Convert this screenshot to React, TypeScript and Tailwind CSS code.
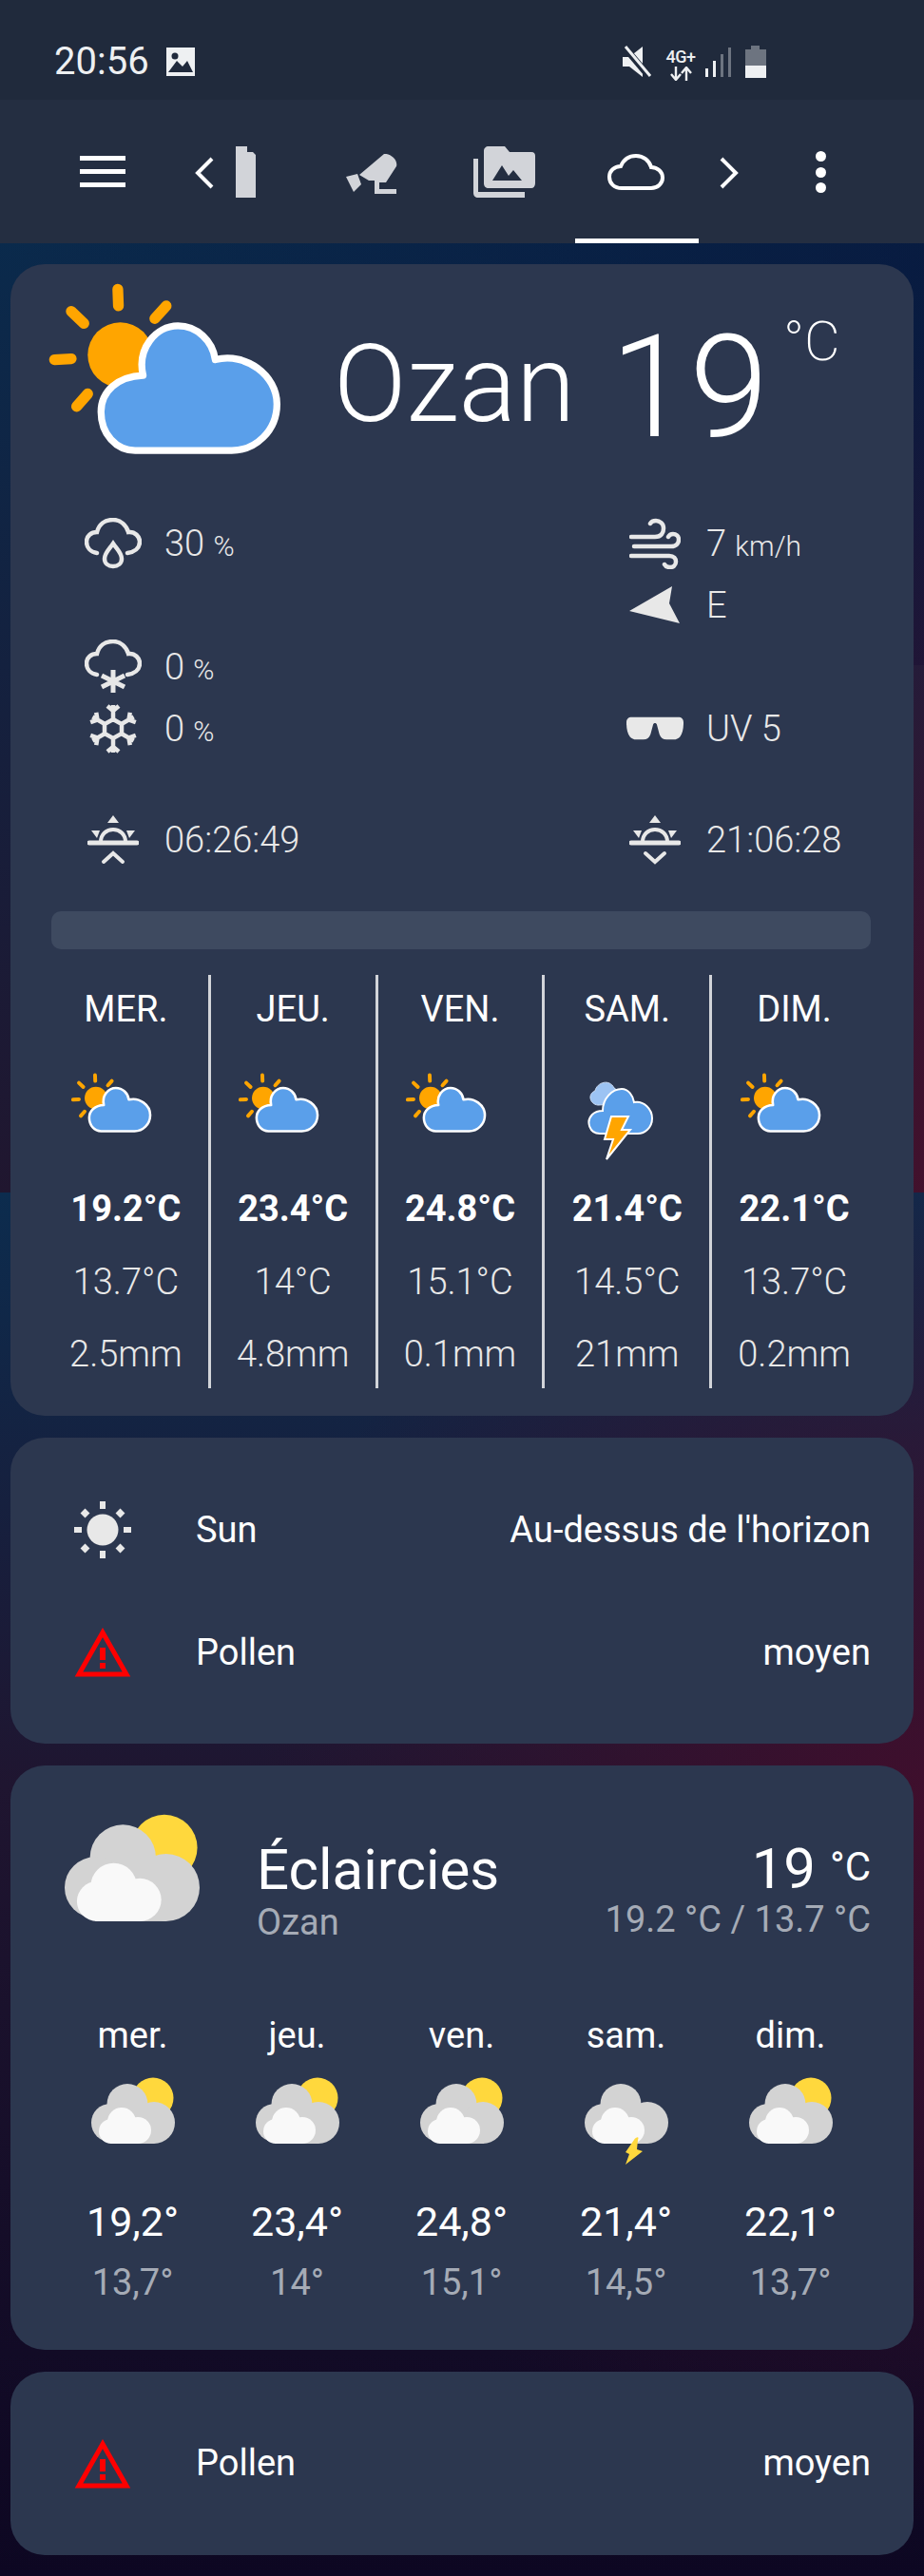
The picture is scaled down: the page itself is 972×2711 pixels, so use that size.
import React from "react";

const font = { fontFamily: "Roboto, sans-serif" };

function SunCloud({ width = 248, stroke = 22 }: { width?: number; stroke?: number }) {
  return (
    <svg width={width} height={(width * 550) / 745} viewBox="150 80 745 550" fill="none">
      <g stroke="#ffa500" strokeWidth="34" strokeLinecap="round">
        <line x1="375" y1="102" x2="377" y2="155" />
        <line x1="228" y1="172" x2="268" y2="210" />
        <line x1="528" y1="155" x2="492" y2="195" />
        <line x1="175" y1="325" x2="228" y2="322" />
        <line x1="245" y1="473" x2="280" y2="433" />
      </g>
      <circle cx="383" cy="310" r="103" fill="#ffa500" />
      <path
        d="M430 612C370 612 322 560 322 490C322 425 375 378 455 375C435 290 495 218 565 218C625 218 675 265 683 325C780 300 878 375 878 465C878 550 810 612 735 612Z"
        fill="#5a9fea"
        stroke="#fff"
        strokeWidth={stroke}
        strokeLinejoin="round"
      />
    </svg>
  );
}

function Storm() {
  return (
    <svg width="72" height="84" viewBox="0 0 72 84" fill="none">
      <path d="M12 26C3 25 1 14 9 11C11 2 24 -2 29 8C34 10 35 20 30 25Z" fill="#9cc3f3" stroke="#cfe0f8" strokeWidth="1" />
      <path d="M14 56C3 56 -1 43 6 36C9 33 13 32 17 32C17 19 27 9 37 9C44 9 49 16 50 23C60 21 69 30 69 40C69 50 61 56 54 56Z" fill="#5a9fea" stroke="#fff" strokeWidth="2" />
      <path d="M26 38H44L37 52H46L21 83L28 62H19Z" fill="#ffa500" stroke="#fff" strokeWidth="2" strokeLinejoin="miter" />
    </svg>
  );
}

function GreyCloud({ sun = true, bolt = false, width = 88 }: { sun?: boolean; bolt?: boolean; width?: number }) {
  const h = bolt ? 92 : 70;
  return (
    <svg width={width} height={(width * h) / 88} viewBox={`0 0 88 ${h}`} fill="none">
      {sun && <circle cx="65" cy="22" r="21.5" fill="#ffd83d" />}
      <g fill="#d3d3d3">
        <circle cx="38" cy="28.5" r="21.5" />
        <circle cx="20" cy="48" r="20" />
        <circle cx="66" cy="48" r="22" />
        <rect x="20" y="40" width="46" height="30" />
      </g>
      <g fill="#f9f9f9">
        <circle cx="32" cy="47" r="15" />
        <circle cx="21" cy="57" r="13" />
        <circle cx="49" cy="56" r="14" />
        <rect x="21" y="50" width="28" height="20" />
      </g>
      {bolt && <path d="M52 66C54 63 58 62 56 66L55 76L61 78L43 92L47 81L43 79Z" fill="#ffd83d" />}
    </svg>
  );
}

const I = "#e8e8e8";

function DropCloud() {
  return (
    <svg width="60" height="54" viewBox="0 0 60 54" fill="none">
      <path d="M13 37C6 36 2 31 2 25C2 19 7 15 13 15C15 7 21 2 30 2C38 2 44 8 46 15C53 14 58 20 58 25C58 32 52 36 45 37" stroke={I} strokeWidth="4.5" strokeLinecap="round" />
      <path d="M30 27C26 33 21 37 21 43C21 48 25 51 30 51C35 51 39 48 39 43C39 37 34 33 30 27Z" stroke={I} strokeWidth="4.5" />
    </svg>
  );
}
function SnowCloud() {
  return (
    <svg width="60" height="58" viewBox="0 0 60 58" fill="none">
      <path d="M13 37C6 36 2 31 2 25C2 19 7 15 13 15C15 7 21 2 30 2C38 2 44 8 46 15C53 14 58 20 58 25C58 32 52 36 45 37" stroke={I} strokeWidth="4.5" strokeLinecap="round" />
      <path d="M30 32V56M18 38L42 50M42 38L18 50" stroke={I} strokeWidth="5" />
    </svg>
  );
}
function Snowflake() {
  const arm = (
    <>
      <path d="M26 16V2M20 3L26 8L32 3" />
      <path d="M26 38V52M20 51L26 46L32 51" />
    </>
  );
  return (
    <svg width="52" height="54" viewBox="0 0 52 54" fill="none" stroke={I} strokeWidth="4.5">
      <g>{arm}</g>
      <g transform="rotate(60 26 27)">{arm}</g>
      <g transform="rotate(120 26 27)">{arm}</g>
      <path d="M26 17L35 22V32L26 37L17 32V22Z" />
    </svg>
  );
}
function Wind() {
  return (
    <svg width="54" height="54" viewBox="0 0 54 54" fill="none" stroke={I} strokeWidth="4.5" strokeLinecap="round">
      <path d="M2 20H27C34 20 36 15 36 11C36 6 32 3 28 3C25 3 23 4 22 6" />
      <path d="M5 30H44C50 30 52 26 52 23C52 19 49 17 46 17C44 17 42 18 41 20" />
      <path d="M2 40H42C47 40 49 43 49 46C49 50 46 52 43 52C40 52 38 51 37 49" />
    </svg>
  );
}
function Arrow() {
  return (
    <svg width="54" height="40" viewBox="0 0 54 40" fill={I}>
      <path d="M0 26L45 0L42 18L53 39Z" />
    </svg>
  );
}
function Glasses() {
  return (
    <svg width="64" height="26" viewBox="0 0 64 26" fill={I}>
      <path d="M6 0H58C62 0 64 2 64 6C64 13 63 18 60 22C58 24 56 25 53 25H45C41 25 38.5 23 37 19L34 8C33 6 31 6 30 8L27 19C25.5 23 23 25 19 25H11C8 25 6 24 4 22C1 18 0 13 0 6C0 2 2 0 6 0Z" />
    </svg>
  );
}
function SunTime({ up }: { up: boolean }) {
  return (
    <svg width="54" height="52" viewBox="0 0 54 52" fill="none">
      <path d="M27 0L33 8H21Z" fill={I} />
      <path d="M4 16H13L10 24Z" fill={I} />
      <path d="M50 16H41L44 24Z" fill={I} />
      <path d="M14 28C14 20 20 15 27 15C34 15 40 20 40 28" stroke={I} strokeWidth="4" />
      <path d="M2 29H52" stroke={I} strokeWidth="5" strokeLinecap="round" />
      <path d={up ? "M17 49L27 40L37 49" : "M17 40L27 49L37 40"} stroke={I} strokeWidth="4" strokeLinecap="round" />
    </svg>
  );
}
function SunIcon() {
  return (
    <svg width="60" height="60" viewBox="0 0 60 60" fill={I}>
      <circle cx="30" cy="30" r="16.5" />
      <rect x="27" y="0" width="6" height="8" />
      <rect x="27" y="52" width="6" height="8" />
      <rect x="0" y="27" width="8" height="6" />
      <rect x="52" y="27" width="8" height="6" />
      <rect x="8" y="9" width="7" height="7" transform="rotate(45 11.5 12.5)" />
      <rect x="45" y="9" width="7" height="7" transform="rotate(45 48.5 12.5)" />
      <rect x="8" y="46" width="7" height="7" transform="rotate(45 11.5 49.5)" />
      <rect x="45" y="46" width="7" height="7" transform="rotate(45 48.5 49.5)" />
    </svg>
  );
}
function Warn() {
  return (
    <svg width="60" height="52" viewBox="0 0 60 52" fill="none">
      <path d="M30 5L55 49H5Z" stroke="#f00" strokeWidth="5" />
      <rect x="27" y="21" width="6" height="13" fill="#f00" />
      <rect x="27" y="37" width="6" height="6" fill="#f00" />
    </svg>
  );
}

const days = [
  ["MER.", "19.2°C", "13.7°C", "2.5mm"],
  ["JEU.", "23.4°C", "14°C", "4.8mm"],
  ["VEN.", "24.8°C", "15.1°C", "0.1mm"],
  ["SAM.", "21.4°C", "14.5°C", "21mm"],
  ["DIM.", "22.1°C", "13.7°C", "0.2mm"],
];
const mini = [
  ["mer.", "19,2°", "13,7°"],
  ["jeu.", "23,4°", "14°"],
  ["ven.", "24,8°", "15,1°"],
  ["sam.", "21,4°", "14,5°"],
  ["dim.", "22,1°", "13,7°"],
];

function Stat({ icon, children }: { icon: React.ReactNode; children: React.ReactNode }) {
  return (
    <div className="flex items-center h-[65px]">
      <div className="w-[60px] flex justify-center">{icon}</div>
      <div className="ml-[24px] text-[38px] font-light text-[#e8e8e8] leading-none whitespace-nowrap">{children}</div>
    </div>
  );
}

export default function App() {
  return (
    <div
      style={font}
      className="w-[972px] h-[2711px] overflow-hidden text-white [background:radial-gradient(ellipse_620px_900px_at_100%_100%,rgba(72,16,44,0.85),transparent)_0_0/972px_1255px_no-repeat,radial-gradient(ellipse_700px_760px_at_100%_44%,rgba(66,14,44,0.9),transparent)_0_1255px/972px_1456px_no-repeat,linear-gradient(to_right,transparent,rgba(6,16,56,0.55))_0_0/972px_700px_no-repeat,linear-gradient(to_bottom,#0a2a4c_250px,#20162f_1255px,#0c2c4e_1255px,#1f1530_1880px,#0d0722_2711px)]"
    >
      <div className="h-[105px] bg-[#202a3c] flex items-start pl-[57px] pt-[45px] relative">
        <span className="text-[40px] text-[#eef0f2] leading-[40px]">20:56</span>
        <svg className="ml-[17px] mt-[5px]" width="32" height="30" viewBox="0 0 32 30">
          <path d="M1 0H31V30H1Z" fill="#eef0f2" />
          <circle cx="10" cy="9" r="3.5" fill="#202a3c" />
          <path d="M3 26L12 14L18 20L23 14L29 26Z" fill="#202a3c" />
        </svg>
        <div className="absolute left-[654px] top-[48px] h-[34px] flex items-start">
          <svg width="32" height="34" viewBox="0 0 32 34">
            <path d="M1 12H8L22 1V33L8 22H1Z" fill="#eef0f2" />
            <path d="M4 3L31 35" stroke="#202a3c" strokeWidth="7" />
            <path d="M4 1L30 32" stroke="#eef0f2" strokeWidth="3" />
          </svg>
          <div className="w-[32px] ml-[14px] flex flex-col items-center">
            <span className="text-[18px] font-medium text-[#eef0f2] leading-[20px] mt-[2px] tracking-[-0.5px]">4G+</span>
            <svg width="24" height="15" viewBox="0 0 24 15" fill="none" stroke="#eef0f2" strokeWidth="2.4">
              <path d="M7 0V12M2 8L7 14L12 8" />
              <path d="M18 15V3M13 7L18 1L23 7" />
            </svg>
          </div>
          <svg className="ml-[10px] mt-[2px]" width="28" height="32" viewBox="0 0 28 32">
            <rect x="0" y="22" width="3" height="9" fill="#eef0f2" />
            <rect x="8" y="14" width="3" height="17" fill="#eef0f2" />
            <rect x="16" y="7" width="3" height="24" fill="#6d7480" />
            <rect x="24" y="0" width="3" height="31" fill="#6d7480" />
          </svg>
          <svg className="ml-[14px]" width="22" height="34" viewBox="0 0 22 34">
            <path d="M6 0H15V4H21V12H0V4H6Z" fill="#6d7480" />
            <rect x="0" y="4" width="22" height="17" fill="#6d7480" />
            <rect x="0" y="21" width="22" height="13" fill="#eef0f2" />
          </svg>
        </div>
      </div>

      <div className="h-[151px] bg-[#242e41] flex items-center relative">
        <div className="absolute left-[84px] top-[59px] w-[48px] h-[33px] flex flex-col justify-between">
          <div className="h-[5px] bg-white" />
          <div className="h-[5px] bg-white" />
          <div className="h-[5px] bg-white" />
        </div>
        <svg className="absolute left-[204px] top-[60px]" width="22" height="34" viewBox="0 0 22 34" fill="none">
          <path d="M19 2L4 17L19 32" stroke="#fff" strokeWidth="4" />
        </svg>
        <svg className="absolute left-[248px] top-[49px]" width="22" height="54" viewBox="0 0 22 54">
          <path d="M0 0H12V6H18L21 9V54H0Z" fill="#d2d4d9" />
        </svg>
        <svg className="absolute left-[364px] top-[57px]" width="56" height="42" viewBox="0 0 56 42" fill="#d2d4d9">
          <path d="M14 22L40 0C46 -1 55 6 53 13L42 30H35V37H53V42H30V28H24Z" />
          <path d="M0 24L12 21L16 32L8 40Z" />
        </svg>
        <svg className="absolute left-[498px] top-[49px]" width="66" height="54" viewBox="0 0 66 54" fill="#d2d4d9">
          <path d="M11 5C11 2 13 0 16 0H33L38 6H61C64 6 65 8 65 10V39C65 42 63 44 61 44H16C13 44 11 42 11 39Z" />
          <path d="M0 13H5V48H54V54H5C2 54 0 52 0 49Z" />
          <path d="M20 36L30 20L37 31L42 25L51 36Z" fill="#242e41" />
        </svg>
        <svg className="absolute left-[639px] top-[57px]" width="60" height="38" viewBox="0 0 60 38" fill="none">
          <path d="M15 36C7 36 2 31 2 24C2 18 7 13 14 13C17 6 23 2 30 2C38 2 44 7 46 14C53 14 58 19 58 25C58 31 53 36 46 36Z" stroke="#fff" strokeWidth="4" />
        </svg>
        <svg className="absolute left-[756px] top-[60px]" width="22" height="34" viewBox="0 0 22 34" fill="none">
          <path d="M3 2L18 17L3 32" stroke="#fff" strokeWidth="4" />
        </svg>
        <div className="absolute left-[858px] top-[54px] w-[11px] h-[44px] flex flex-col justify-between">
          <div className="w-[11px] h-[11px] rounded-full bg-white" />
          <div className="w-[11px] h-[11px] rounded-full bg-white" />
          <div className="w-[11px] h-[11px] rounded-full bg-white" />
        </div>
        <div className="absolute left-[605px] top-[146px] w-[130px] h-[5px] bg-white" />
      </div>

      <div className="px-[11px] pt-[22px] flex flex-col gap-[23px]">
        <div className="h-[1212px] bg-[#2c374f] rounded-[36px] relative">
          <div className="absolute left-[38px] top-[19px]"><SunCloud /></div>
          <div className="absolute left-[340px] top-[62px] text-[113px] font-light leading-[130px]">Ozan</div>
          <div className="absolute left-[631px] top-[45px] text-[150px] font-light leading-[170px]">19</div>
          <div className="absolute left-[813px] top-[48px] text-[58px] font-extralight leading-[66px]">°C</div>

          <div className="absolute left-[78px] top-[261px]"><Stat icon={<DropCloud />}>30 <span className="text-[30px]">%</span></Stat></div>
          <div className="absolute left-[78px] top-[391px]"><Stat icon={<SnowCloud />}>0 <span className="text-[30px]">%</span></Stat></div>
          <div className="absolute left-[78px] top-[456px]"><Stat icon={<Snowflake />}>0 <span className="text-[30px]">%</span></Stat></div>
          <div className="absolute left-[78px] top-[573px]"><Stat icon={<SunTime up />}>06:26:49</Stat></div>

          <div className="absolute left-[648px] top-[261px]"><Stat icon={<Wind />}>7 <span className="text-[30px]">km/h</span></Stat></div>
          <div className="absolute left-[648px] top-[326px]"><Stat icon={<Arrow />}>E</Stat></div>
          <div className="absolute left-[648px] top-[456px]"><Stat icon={<Glasses />}>UV 5</Stat></div>
          <div className="absolute left-[648px] top-[573px]"><Stat icon={<SunTime up={false} />}>21:06:28</Stat></div>

          <div className="absolute left-[43px] right-[45px] top-[681px] h-[40px] rounded-[10px] bg-[#3e4a60]" />

          <div className="absolute left-[35px] top-[748px] w-[876px] h-[435px] flex">
            {days.map((d, i) => (
              <div key={d[0]} className={`flex-1 flex flex-col items-center ${i < 4 ? "border-r-[3px] border-[#d2d4d9]" : ""}`}>
                <div className="mt-[14px] text-[38px] leading-[44px] text-white">{d[0]}</div>
                <div className="h-[90px] mt-[45px] flex items-start -translate-x-[15px]">
                  {i === 3 ? <div className="mt-[8px] translate-x-[8px]"><Storm /></div> : <SunCloud width={86} stroke={22} />}
                </div>
                <div className="mt-[31px] text-[38px] font-bold leading-[44px]">{d[1]}</div>
                <div className="mt-[33px] text-[38px] font-light leading-[44px] text-[#e8e8e8]">{d[2]}</div>
                <div className="mt-[32px] text-[38px] font-light leading-[44px] text-[#e8e8e8]">{d[3]}</div>
              </div>
            ))}
          </div>
        </div>

        <div className="h-[322px] bg-[#2c374f] rounded-[36px] pl-[67px] pr-[45px] pt-[67px] flex flex-col gap-[69px]">
          <div className="h-[60px] flex items-center text-[38px]">
            <SunIcon />
            <span className="ml-[68px]">Sun</span>
            <span className="ml-auto">Au-dessus de l'horizon</span>
          </div>
          <div className="h-[60px] flex items-center text-[38px]">
            <Warn />
            <span className="ml-[68px]">Pollen</span>
            <span className="ml-auto">moyen</span>
          </div>
        </div>

        <div className="h-[615px] bg-[#2c374f] rounded-[36px] relative">
          <div className="absolute left-[57px] top-[51px]"><GreyCloud width={142} /></div>
          <div className="absolute left-[259px] top-[74px]">
            <div className="text-[60px] leading-[71px]">Éclaircies</div>
            <div className="text-[38px] leading-[40px] text-[#a5abb6]">Ozan</div>
          </div>
          <div className="absolute right-[45px] top-[74px] text-right">
            <div className="leading-[66px] text-[60px]">19 <span className="text-[42px] align-[8px]">°C</span></div>
            <div className="text-[38px] leading-[40px] text-[#a5abb6]">19.2 °C / 13.7 °C</div>
          </div>
          <div className="absolute left-[42px] top-[262px] w-[865px] flex">
            {mini.map((m, i) => (
              <div key={m[0]} className="flex-1 flex flex-col items-center">
                <div className="text-[38px] leading-[44px]">{m[0]}</div>
                <div className="h-[92px] mt-[22px]"><GreyCloud bolt={i === 3} sun={i !== 3} /></div>
                <div className="mt-[36px] text-[43px] leading-[48px]">{m[1]}</div>
                <div className="mt-[20px] text-[38px] leading-[40px] text-[#a5abb6]">{m[2]}</div>
              </div>
            ))}
          </div>
        </div>

        <div className="h-[193px] bg-[#2c374f] rounded-[36px] pl-[67px] pr-[45px] flex items-center text-[38px]">
          <Warn />
          <span className="ml-[68px]">Pollen</span>
          <span className="ml-auto">moyen</span>
        </div>
      </div>
    </div>
  );
}
